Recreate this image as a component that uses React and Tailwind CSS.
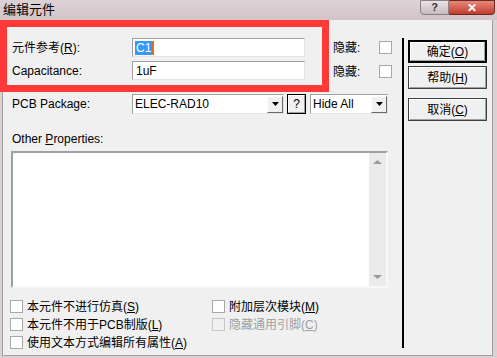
import React from "react";

const FONT = { fontFamily: '"Liberation Sans", "Noto Sans CJK SC", sans-serif' };

const sunken =
  "border border-t-[#a0a0a0] border-l-[#a0a0a0] border-r-[#e3e3e3] border-b-[#e3e3e3] bg-white";

const Check = ({ disabled }) => (
  <span
    className={`inline-block h-[13px] w-[13px] shrink-0 border ${
      disabled ? "border-[#c8c8c8] bg-[#f0f0f0]" : "border-[#a8a8a8] bg-white"
    }`}
  />
);

const Arrow = () => (
  <span className="flex h-[17px] w-[16px] items-center justify-center border border-t-white border-l-white border-r-[#696969] border-b-[#696969] bg-[#f0f0f0]">
    <svg width="7" height="4" viewBox="0 0 7 4">
      <path d="M0 0h7L3.5 4z" fill="#000" />
    </svg>
  </span>
);

const Btn = ({ children, def }) => (
  <div
    className={`flex h-[23px] w-[79px] items-center justify-center ${
      def ? "border-2 border-black" : "border border-[#404040]"
    }`}
  >
    <div className="flex h-full w-full items-center justify-center border border-t-white border-l-white border-r-[#a0a0a0] border-b-[#a0a0a0] bg-[#f0f0f0] text-[12px] text-black">
      <span>{children}</span>
    </div>
  </div>
);

const Opt = ({ children, disabled, className = "" }) => (
  <div className={`flex h-[13px] items-center gap-[4px] ${disabled ? "text-[#a0a0a0]" : ""} ${className}`}>
    <Check disabled={disabled} />
    <span>{children}</span>
  </div>
);

export default function App() {
  return (
    <div className="flex h-[358px] w-[497px] flex-col bg-[#dcd0d3] text-black" style={FONT}>
      {/* title bar */}
      <div className="relative flex h-[20px] items-start bg-gradient-to-b from-[#ddd2d6] to-[#d2c4c8]">
        <span className="ml-[3px] mt-[2px] text-[13px] leading-[16px]">编辑元件</span>
        <div className="ml-auto mr-[2px] flex h-[15px]">
          <div className="flex w-[29px] items-center justify-center rounded-bl-[4px] border border-[#8a7f85] bg-gradient-to-b from-[#eae3e6] to-[#c7bcc0] text-[11px] font-bold text-[#333]">
            ?
          </div>
          <div className="flex w-[46px] items-center justify-center rounded-br-[4px] border border-l-0 border-[#6e2a22] bg-gradient-to-b from-[#e4897c] to-[#c1392b] text-[12px] font-bold text-white">
            ✕
          </div>
        </div>
      </div>

      {/* client */}
      <div className="ml-[2px] flex h-[336px] w-[491px] border-x border-b border-[#a0a0a0] bg-[#f0f0f0]">
        {/* left part */}
        <div className="flex w-[399px] flex-col">
          <div className="flex">
            <div className="-ml-[3px] flex h-[72px] w-[329px] flex-col gap-[4px] border-[7px] border-[#ff3838] pl-[5px] pt-[11px]">
              <div className="flex h-[19px] items-center">
                <span className="w-[120px] text-[12px]">
                  元件参考(<u>R</u>):
                </span>
                <div className={`flex h-[19px] w-[173px] items-center pl-[2px] ${sunken}`}>
                  <span className="bg-[#3399ff] px-[1px] text-[12px] leading-[14px] text-white">C1</span>
                  <span className="h-[14px] w-[2px] bg-[#e07010]" />
                </div>
              </div>
              <div className="flex h-[19px] items-center">
                <span className="w-[120px] text-[12px]">Capacitance:</span>
                <div className={`flex h-[19px] w-[173px] items-center pl-[3px] text-[12px] ${sunken}`}>1uF</div>
              </div>
            </div>
            <div className="flex flex-col gap-[11px] pl-[4px] pt-[21px]">
              {[0, 1].map((i) => (
                <div key={i} className="flex h-[13px] items-center">
                  <span className="w-[46px] text-[12px]">隐藏:</span>
                  <Check />
                </div>
              ))}
            </div>
          </div>

          <div className="mt-[2px] flex h-[20px] items-center pl-[9px]">
            <span className="w-[120px] text-[12px]">PCB Package:</span>
            <div className={`flex h-[20px] w-[152px] items-center justify-between pl-[2px] ${sunken}`}>
              <span className="text-[12px]">ELEC-RAD10</span>
              <Arrow />
            </div>
            <div className="ml-[3px] flex h-[20px] w-[19px] items-center justify-center border border-black bg-[#f0f0f0] text-[12px]">
              <div className="flex h-full w-full items-center justify-center border border-t-white border-l-white border-r-[#a0a0a0] border-b-[#a0a0a0]">
                ?
              </div>
            </div>
            <div className={`ml-[4px] flex h-[20px] w-[78px] items-center justify-between pl-[2px] ${sunken}`}>
              <span className="text-[12px]">Hide All</span>
              <Arrow />
            </div>
          </div>

          <div className="mt-[18px] pl-[9px] text-[12px] leading-[14px]">
            Other <u>P</u>roperties:
          </div>

          <div className="ml-[8px] mt-[5px] flex h-[137px] w-[377px] border-2 border-t-[#a0a0a0] border-l-[#a0a0a0] border-r-[#f8f8f8] border-b-[#f8f8f8]">
            <div className="flex-1 bg-white" />
            <div className="flex w-[17px] flex-col items-center justify-between bg-[#ebebeb] py-[7px]">
              <svg width="9" height="4" viewBox="0 0 9 4">
                <path d="M0 4L4.5 0L9 4z" fill="#9a9a9a" />
              </svg>
              <svg width="9" height="4" viewBox="0 0 9 4">
                <path d="M0 0h9L4.5 4z" fill="#9a9a9a" />
              </svg>
            </div>
          </div>

          <div className="mt-[12px] grid grid-cols-[202px_1fr] gap-y-[5px] pl-[7px] text-[12px]">
            <Opt>
              本元件不进行仿真(<u>S</u>)
            </Opt>
            <Opt>
              附加层次模块(<u>M</u>)
            </Opt>
            <Opt>
              本元件不用于PCB制版(<u>L</u>)
            </Opt>
            <Opt disabled>
              隐藏通用引脚(<u>C</u>)
            </Opt>
            <Opt className="col-span-2">
              使用文本方式编辑所有属性(<u>A</u>)
            </Opt>
          </div>
        </div>

        {/* separator */}
        <div className="mt-[18px] h-[310px] w-[2px] bg-black" />

        {/* buttons */}
        <div className="flex flex-col pl-[4px] pt-[20px]">
          <Btn def>
            确定(<u>O</u>)
          </Btn>
          <div className="mt-[3px]">
            <Btn>
              帮助(<u>H</u>)
            </Btn>
          </div>
          <div className="mt-[9px]">
            <Btn>
              取消(<u>C</u>)
            </Btn>
          </div>
        </div>
      </div>
    </div>
  );
}
